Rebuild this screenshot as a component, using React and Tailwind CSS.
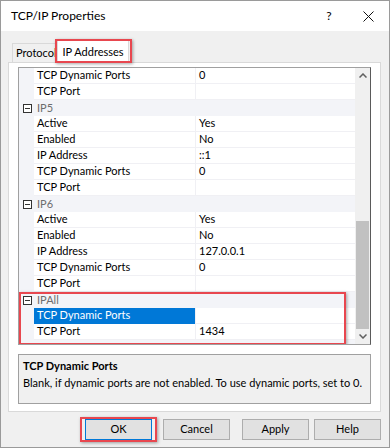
import React from "react";

const rows = [
  { n: "TCP Dynamic Ports", v: "0" },
  { n: "TCP Port", v: "" },
  { h: "IP5" },
  { n: "Active", v: "Yes" },
  { n: "Enabled", v: "No" },
  { n: "IP Address", v: "::1" },
  { n: "TCP Dynamic Ports", v: "0" },
  { n: "TCP Port", v: "" },
  { h: "IP6" },
  { n: "Active", v: "Yes" },
  { n: "Enabled", v: "No" },
  { n: "IP Address", v: "127.0.0.1" },
  { n: "TCP Dynamic Ports", v: "0" },
  { n: "TCP Port", v: "" },
  { h: "IPAll" },
  { n: "TCP Dynamic Ports", v: "", sel: true },
  { n: "TCP Port", v: "1434" },
];

function MinusBox() {
  return (
    <svg width="9" height="9" viewBox="0 0 9 9" className="block">
      <rect x="0.5" y="0.5" width="8" height="8" fill="#fff" stroke="#333" />
      <line x1="2" y1="4.5" x2="7" y2="4.5" stroke="#333" />
    </svg>
  );
}

function Row({ r }) {
  if (r.h) {
    return (
      <div className="flex h-[16px] bg-[#f3f4f8] items-center">
        <div className="w-[15px] flex justify-center items-center pl-[2px]">
          <MinusBox />
        </div>
        <div className="pl-[3px] text-[#6d6d6d]">{r.h}</div>
      </div>
    );
  }
  return (
    <div className="flex h-[16px] bg-[#f3f4f8]">
      <div className="w-[15px]" />
      <div
        className={
          r.sel
            ? "w-[161px] bg-[#0078d7] text-white pl-[3px] flex items-center border-b border-[#0078d7] whitespace-nowrap"
            : "w-[161px] bg-white pl-[3px] flex items-center border-b border-[#f0f0f4] whitespace-nowrap"
        }
      >
        {r.n}
      </div>
      <div className="w-[1px] bg-[#f0f0f4]" />
      <div className="flex-1 bg-white pl-[3px] flex items-center border-b border-[#f0f0f4]">
        {r.v}
      </div>
    </div>
  );
}

function Btn({ children }) {
  return (
    <div className="w-[67px] h-[21px] border border-[#adadad] bg-[#e1e1e1] flex items-center justify-center text-black">
      {children}
    </div>
  );
}

export default function App() {
  return (
    <div
      className="w-[390px] h-[448px] border border-[#9a9a9a] bg-[#f0f0f0] flex flex-col text-[11px] text-black overflow-hidden"
      style={{ fontFamily: "Lato, 'Noto Sans', sans-serif" }}
    >
      {/* title bar */}
      <div className="h-[30px] bg-white flex items-center pl-[10px] shrink-0">
        <div className="text-[12px]">TCP/IP Properties</div>
        <div className="ml-auto w-[10px] text-center text-[12px]">?</div>
        <div className="w-[41px] ml-[14px] flex justify-center">
          <svg width="11" height="11" viewBox="0 0 11 11">
            <path d="M0.5 0.5 L10.5 10.5 M10.5 0.5 L0.5 10.5" stroke="#111" strokeWidth="1" />
          </svg>
        </div>
      </div>

      {/* body */}
      <div className="flex-1 flex flex-col px-[7px] pt-[8px]">
        {/* tabs */}
        <div className="h-[23px] flex items-end relative shrink-0">
          <div className="ml-[4px] w-[50px] h-[19px] border border-b-0 border-[#d9d9d9] bg-[#f0f0f0] pl-[3px] flex items-center">
            <span className="whitespace-nowrap">Protocol</span>
          </div>
          <div className="-ml-[5px] w-[72px] h-[23px] border border-b-0 border-[#d9d9d9] bg-white flex items-center justify-center relative z-10 -mb-[1px] whitespace-nowrap">
            IP Addresses
            <div className="absolute -left-[3px] -top-[2px] w-[77px] h-[24px] border-2 border-[#e8474f] shadow-[1px_1px_3px_rgba(0,0,0,0.35)]" />
          </div>
        </div>

        {/* tab panel */}
        <div className="w-[373px] h-[350px] border border-[#d9d9d9] bg-white px-[9px] pt-[4px] flex flex-col">
          {/* grid */}
          <div className="relative h-[278px] border border-[#a0a0a0] border-r-[#5a5a5a] flex overflow-hidden">
            <div className="flex-1 flex flex-col bg-[#f3f4f8]">
              {rows.map((r, i) => (
                <Row key={i} r={r} />
              ))}
            </div>
            {/* scrollbar */}
            <div className="w-[15px] bg-[#f0f0f0] flex flex-col items-center">
              <div className="h-[16px] flex items-center justify-center">
                <svg width="8" height="5" viewBox="0 0 8 5">
                  <path d="M0.5 4.5 L4 1 L7.5 4.5" stroke="#606060" strokeWidth="1.5" fill="none" />
                </svg>
              </div>
              <div className="flex-1 w-full flex flex-col">
                <div className="h-[137px]" />
                <div className="h-[108px] bg-[#c1c1c1] mx-[1px]" />
              </div>
              <div className="h-[16px] flex items-center justify-center">
                <svg width="8" height="5" viewBox="0 0 8 5">
                  <path d="M0.5 0.5 L4 4 L7.5 0.5" stroke="#606060" strokeWidth="1.5" fill="none" />
                </svg>
              </div>
            </div>
            {/* red highlight over IPAll */}
            <div className="absolute left-0 top-[224px] w-[327px] h-[53px] border-2 border-[#e8474f] shadow-[1px_1px_3px_rgba(0,0,0,0.35)]" />
          </div>

          {/* description */}
          <div className="mt-[9px] h-[50px] border border-[#a0a0a0] bg-[#f0f0f0] px-[4px] pt-[2px] leading-[17px] whitespace-nowrap">
            <div className="font-bold">TCP Dynamic Ports</div>
            <div>Blank, if dynamic ports are not enabled. To use dynamic ports, set to 0.</div>
          </div>
        </div>

        {/* buttons */}
        <div className="flex justify-end pr-[1px] mt-[7px]">
          <div className="relative">
            <div className="w-[67px] h-[21px] border border-[#0078d7] bg-[#e1e1e1] flex items-center justify-center">
              OK
            </div>
            <div className="absolute -left-[5px] -top-[2px] w-[77px] h-[25px] border-2 border-[#e8474f] shadow-[1px_1px_3px_rgba(0,0,0,0.35)]" />
          </div>
          <div className="ml-[11px]">
            <Btn>Cancel</Btn>
          </div>
          <div className="ml-[12px]">
            <Btn>Apply</Btn>
          </div>
          <div className="ml-[5px]">
            <Btn>Help</Btn>
          </div>
        </div>
      </div>
    </div>
  );
}
